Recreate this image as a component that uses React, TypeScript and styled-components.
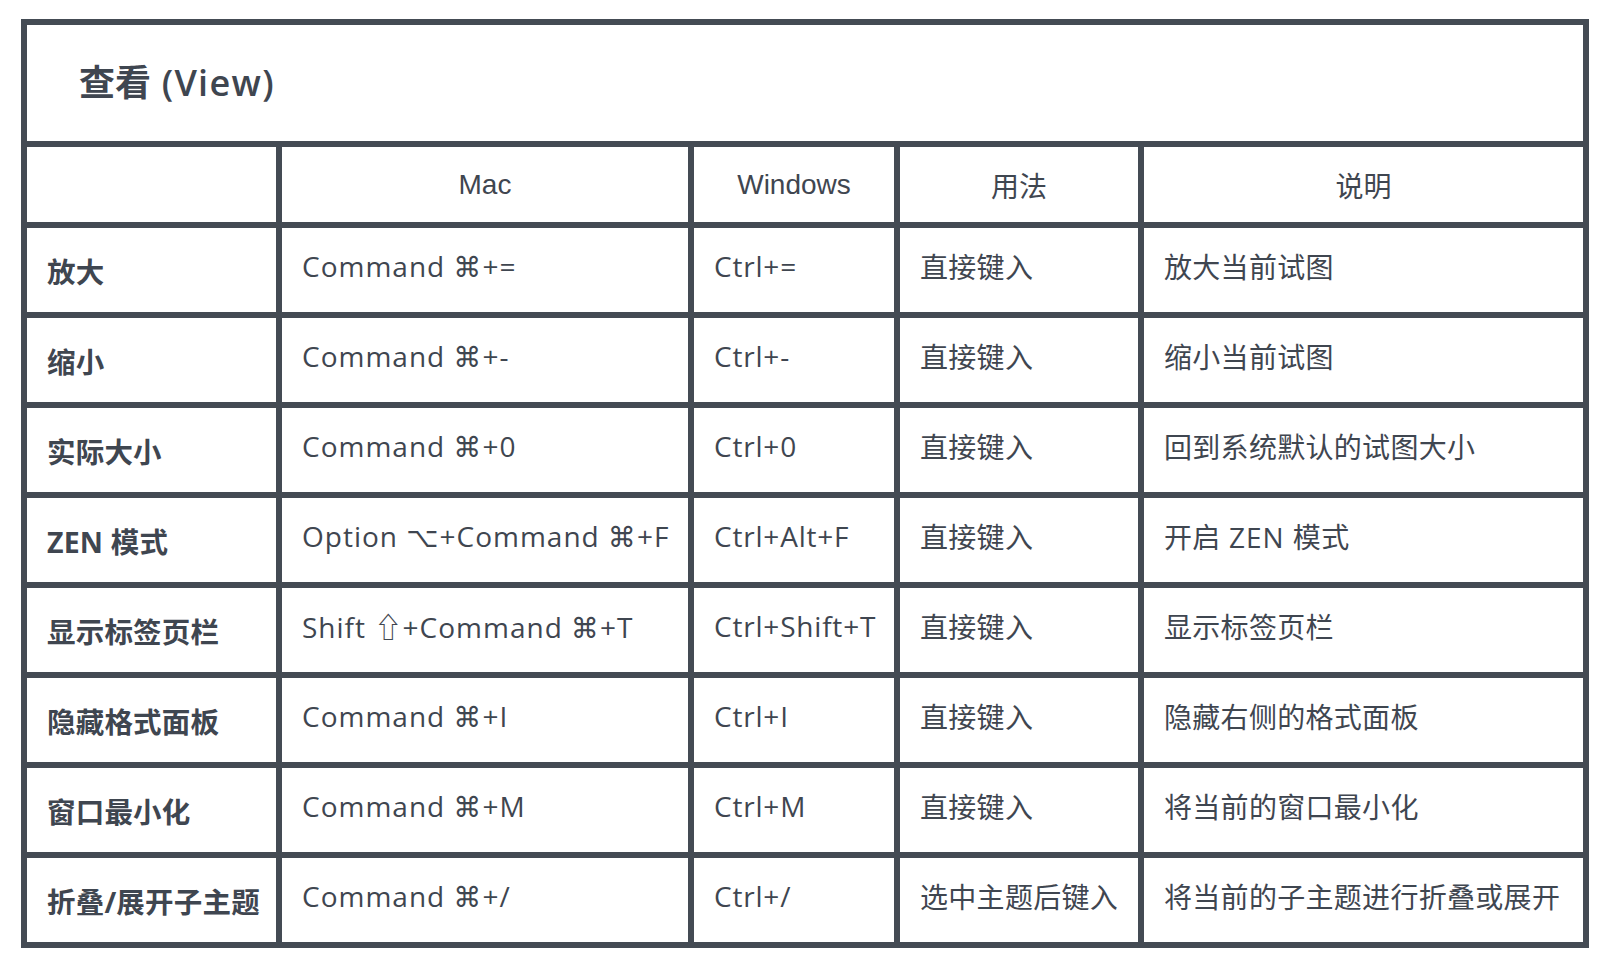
import * as React from 'react'
import styled, { createGlobalStyle } from 'styled-components'

const ink = '#3f4650'
const rule = '#444b54'

const GlobalStyle = createGlobalStyle`
  html, body {
    margin: 0;
    padding: 0;
    background: #ffffff;
  }
`

const Page = styled.div`
  padding: 19px 0 0 21px;
`

const Sheet = styled.div`
  box-sizing: border-box;
  width: 1568px;
  display: grid;
  grid-template-columns: 249px 406px 200px 238px 439px;
  grid-template-rows: 116px 75px repeat(8, 84px);
  gap: 6px;
  padding: 6px;
  background: ${rule};
`

const Cell = styled.div`
  background: #ffffff;
  display: flex;
  align-items: center;
  color: ${ink};
  white-space: pre;
  overflow: hidden;
`

const TitleCell = styled(Cell)`
  grid-column: 1 / -1;
  padding: 0 0 6px 52px;
  font-family: 'Open Sans', 'Noto Sans CJK SC', sans-serif;
  font-size: 36px;
  font-weight: 600;
`

const HeadCell = styled(Cell)`
  justify-content: center;
  font-family: 'Liberation Sans', 'Noto Sans CJK SC', sans-serif;
  font-size: 28px;
`

const LabelCell = styled(Cell)`
  padding: 0 0 0 20px;
  font-family: 'Open Sans', 'Noto Sans CJK SC', sans-serif;
  font-size: 28.5px;
  font-weight: 700;
  letter-spacing: 0.2px;
`

const BodyCell = styled(Cell)`
  padding: 0 0 9px 20px;
  font-family: 'Open Sans', 'DejaVu Sans', 'Noto Sans CJK SC', sans-serif;
  font-size: 28px;
  letter-spacing: 0.3px;
`

const Line = styled.span`
  display: inline;
`

// latin runs are tracked wider than the CJK ones
const Latin = styled.span<{ $track: number }>`
  letter-spacing: ${(p) => p.$track}px;
`

// the shift arrow reads better in the CJK face (outlined, cap-high)
const KeyGlyph = styled.span`
  font-family: 'Noto Sans CJK SC', sans-serif;
`

const Mixed = ({ text, track }: { text: string; track: number }) => (
  <Line>
    {text.split(/([\u3400-\u9fff]+|⇧)/).map((part, i) => {
      if (!part) return null
      if (part === '⇧') return <KeyGlyph key={i}>{part}</KeyGlyph>
      if (/[\u3400-\u9fff]/.test(part)) return <span key={i}>{part}</span>
      return (
        <Latin key={i} $track={track}>
          {part}
        </Latin>
      )
    })}
  </Line>
)

interface Shortcut {
  label: string
  mac: string
  win: string
  usage: string
  note: string
}

const shortcuts: Shortcut[] = [
  { label: '放大', mac: 'Command ⌘+=', win: 'Ctrl+=', usage: '直接键入', note: '放大当前试图' },
  { label: '缩小', mac: 'Command ⌘+-', win: 'Ctrl+-', usage: '直接键入', note: '缩小当前试图' },
  { label: '实际大小', mac: 'Command ⌘+0', win: 'Ctrl+0', usage: '直接键入', note: '回到系统默认的试图大小' },
  { label: 'ZEN 模式', mac: 'Option ⌥+Command ⌘+F', win: 'Ctrl+Alt+F', usage: '直接键入', note: '开启 ZEN 模式' },
  { label: '显示标签页栏', mac: 'Shift ⇧+Command ⌘+T', win: 'Ctrl+Shift+T', usage: '直接键入', note: '显示标签页栏' },
  { label: '隐藏格式面板', mac: 'Command ⌘+I', win: 'Ctrl+I', usage: '直接键入', note: '隐藏右侧的格式面板' },
  { label: '窗口最小化', mac: 'Command ⌘+M', win: 'Ctrl+M', usage: '直接键入', note: '将当前的窗口最小化' },
  { label: '折叠/展开子主题', mac: 'Command ⌘+/', win: 'Ctrl+/', usage: '选中主题后键入', note: '将当前的子主题进行折叠或展开' }
]

const headings = ['', 'Mac', 'Windows', '用法', '说明']

export default function App() {
  return (
    <Page>
      <GlobalStyle />
      <Sheet>
        <TitleCell>
          <Mixed text='查看 (View)' track={1.3} />
        </TitleCell>
        {headings.map((h, i) => (
          <HeadCell key={i}>{h}</HeadCell>
        ))}
        {shortcuts.map((s) => (
          <React.Fragment key={s.label}>
            <LabelCell>{s.label}</LabelCell>
            <BodyCell>
              <Mixed text={s.mac} track={1} />
            </BodyCell>
            <BodyCell>
              <Mixed text={s.win} track={0.8} />
            </BodyCell>
            <BodyCell>{s.usage}</BodyCell>
            <BodyCell>
              <Mixed text={s.note} track={1} />
            </BodyCell>
          </React.Fragment>
        ))}
      </Sheet>
    </Page>
  )
}
